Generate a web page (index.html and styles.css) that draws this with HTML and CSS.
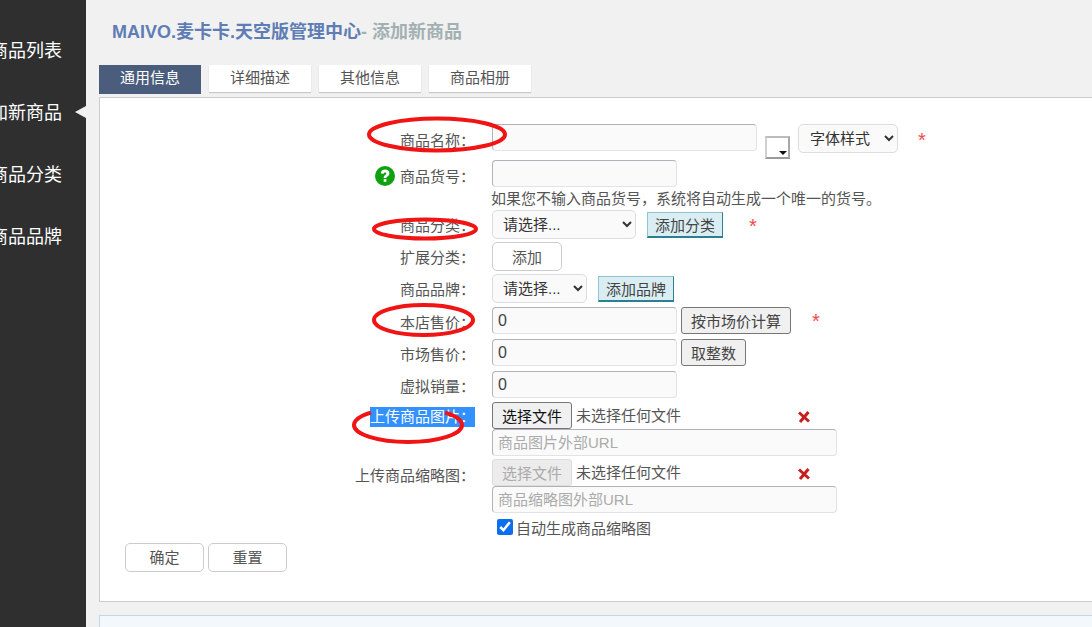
FILE: index.html
```html
<!DOCTYPE html>
<html lang="zh">
<head>
<meta charset="utf-8">
<title>添加新商品</title>
<link rel="stylesheet" href="styles.css">
</head>
<body>
<div class="app">
  <nav class="sidebar">
    <a class="nav-item">商品列表</a>
    <a class="nav-item nav-current">添加新商品</a>
    <a class="nav-item">商品分类</a>
    <a class="nav-item">商品品牌</a>
  </nav>
  <main class="main">
    <h1 class="title"><span class="brand">MAIVO.麦卡卡.天空版管理中心</span><span class="sub">- 添加新商品</span></h1>
    <div class="tabs">
      <a class="tab tab-active">通用信息</a>
      <a class="tab">详细描述</a>
      <a class="tab">其他信息</a>
      <a class="tab">商品相册</a>
    </div>
    <section class="panel">
      <form class="form">
        <div class="label label-name">商品名称：</div>
        <div class="field">
          <input class="input w-name" type="text">
          <span class="swatch"></span>
          <select class="select w-font"><option>字体样式</option></select>
          <span class="star star-name">*</span>
        </div>

        <div class="label label-low"><svg class="help" viewBox="0 0 20 20"><circle cx="10" cy="10" r="10" fill="#10a010"/><path d="M5.800 7.600C5.800 5 7.700 3.600 10.100 3.600s4.300 1.400 4.300 3.600c0 1.700-1 2.500-2 3.200-.8.600-1 .9-1 1.700H8.700c0-1.500.5-2.300 1.400-3 .8-.6 1.200-.9 1.200-1.600 0-.7-.5-1.100-1.200-1.100-.9 0-1.400.6-1.400 1.400z" fill="#fff"/><rect x="8.700" y="13.100" width="2.700" height="2.700" fill="#fff"/></svg>商品货号：</div>
        <div class="field"><input class="input w-sn" type="text"></div>

        <div></div>
        <div class="hint">如果您不输入商品货号，系统将自动生成一个唯一的货号。</div>

        <div class="label">商品分类：</div>
        <div class="field">
          <select class="select w-cat"><option>请选择...</option></select>
          <button type="button" class="btn-add">添加分类</button>
          <span class="star star-cat">*</span>
        </div>

        <div class="label">扩展分类：</div>
        <div class="field"><button type="button" class="btn-plain w-ext">添加</button></div>

        <div class="label">商品品牌：</div>
        <div class="field">
          <select class="select w-brand"><option>请选择...</option></select>
          <button type="button" class="btn-add">添加品牌</button>
        </div>

        <div class="label">本店售价：</div>
        <div class="field">
          <input class="input input-num w-sn" type="text" value="0">
          <button type="button" class="btn-gray">按市场价计算</button>
          <span class="star star-price">*</span>
        </div>

        <div class="label">市场售价：</div>
        <div class="field">
          <input class="input input-num w-sn" type="text" value="0">
          <button type="button" class="btn-gray">取整数</button>
        </div>

        <div class="label">虚拟销量：</div>
        <div class="field"><input class="input input-num w-sn" type="text" value="0"></div>

        <div class="label"><span class="selected">上传商品图片：</span></div>
        <div class="field">
          <button type="button" class="btn-file">选择文件</button>
          <span class="file-name">未选择任何文件</span>
          <svg class="del" viewBox="0 0 14 14"><path d="M2 2.500 L12 11.500 M11.500 2 L3 12" stroke="#c81e1e" stroke-width="3" fill="none"/></svg>
        </div>

        <div></div>
        <div class="field"><input class="input w-url" type="text" placeholder="商品图片外部URL"></div>

        <div class="label label-low">上传商品缩略图：</div>
        <div class="field">
          <button type="button" class="btn-file btn-file-off">选择文件</button>
          <span class="file-name">未选择任何文件</span>
          <svg class="del" viewBox="0 0 14 14"><path d="M2 2.500 L12 11.500 M11.500 2 L3 12" stroke="#c81e1e" stroke-width="3" fill="none"/></svg>
        </div>

        <div></div>
        <div class="field"><input class="input w-url" type="text" placeholder="商品缩略图外部URL"></div>

        <div></div>
        <label class="check-row"><input class="check" type="checkbox" checked>自动生成商品缩略图</label>
      </form>
      <div class="actions">
        <button type="button" class="btn-plain w-act">确定</button>
        <button type="button" class="btn-plain w-act">重置</button>
      </div>
    </section>
    <section class="panel-next"></section>
  </main>
  <svg class="marks" viewBox="0 0 1092 627" width="1092" height="627">
    <g fill="none" stroke="#f01414" stroke-width="4">
      <ellipse cx="437" cy="134.500" rx="68" ry="16"/>
      <ellipse cx="425" cy="229" rx="51" ry="9.500"/>
      <ellipse cx="423.500" cy="320" rx="49.500" ry="15"/>
      <path d="M371 412.600A54 17 0 1 0 445 412.600"/>
    </g>
  </svg>
</div>
</body>
</html>
```
FILE: styles.css
```css
* { box-sizing: border-box; }
html, body { margin: 0; height: 100%; overflow: hidden; }
body {
  font-family: "Liberation Sans", "Noto Sans CJK SC", sans-serif;
  font-size: 15px;
  color: #555;
  background: #f1f1f1;
}
.app { position: relative; display: flex; width: 1092px; height: 627px; overflow: hidden; }

.sidebar {
  flex: 0 0 86px;
  width: 86px;
  background: #2f2f2f;
  padding-top: 20px;
  overflow: hidden;
}
.nav-item {
  position: relative;
  display: flex;
  justify-content: flex-end;
  white-space: nowrap;
  height: 62px;
  line-height: 62px;
  padding-right: 24px;
  color: #fff;
  font-size: 18px;
}
.nav-current::after {
  content: "";
  position: absolute;
  right: 0;
  top: 24px;
  border: 6px solid transparent;
  border-left-width: 0;
  border-right: 11px solid #f1f1f1;
}

.main { flex: 1; min-width: 0; padding: 0 0 0 13px; }
.title {
  margin: 0;
  padding: 22px 0 0 13px;
  height: 65px;
  line-height: 21px;
  font-size: 18px;
  font-weight: bold;
  white-space: nowrap;
}
.brand { color: #5f7db5; }
.sub { color: #a3b0b2; }

.tabs { display: flex; gap: 8px; height: 32px; }
.tab {
  width: 102px;
  height: 27px;
  line-height: 25px;
  text-align: center;
  background: #fff;
  color: #555;
  font-size: 15px;
  box-shadow: 0 1px 1px #c8c8c8;
}
.tab-active { background: #4a5d7c; color: #fff; height: 29px; line-height: 26px; box-shadow: none; }

.panel {
  height: 505px;
  background: #fff;
  border: 1px solid #ccc;
  border-right: 0;
  padding-top: 26px;
}
.form {
  display: grid;
  grid-template-columns: 375px 1fr;
  grid-template-rows: 36px 27px 23px 32px 32px 33px 32px 32px 31px 27px 30px 27px 31px 26px;
  column-gap: 17px;
}
.label {
  display: flex;
  justify-content: flex-end;
  align-items: center;
  height: 27px;
  padding-top: 2px;
  white-space: nowrap;
}
.label-name { padding-top: 3px; }
.label-low { padding-top: 4px; }
.field { display: flex; align-items: flex-start; height: 100%; }
.hint { line-height: 23px; white-space: nowrap; margin-left: -1px; }

.input {
  height: 27px;
  padding: 0 5px;
  border: 1px solid #b4b0b8;
  border-right-color: #e2e2ea;
  border-bottom-color: #e2e2ea;
  border-radius: 4px;
  background: #fafafa;
  font: inherit;
  color: #555;
  outline: 0;
}
.input-num { font-size: 16px; color: #444; }
.input::placeholder { color: #aaa; opacity: 1; }
.w-name { width: 265px; }
.w-sn { width: 185px; }
.w-url { width: 345px; }

.select {
  height: 29px;
  padding: 0 2px 0 6px;
  border: 1px solid #dcdce4;
  border-radius: 5px;
  background-color: #fafafa;
  font: inherit;
  color: #333;
}
.w-font { width: 100px; margin-left: 8px; padding-left: 7px; }
.w-cat { width: 144px; }
.w-brand { width: 95px; }

.swatch {
  position: relative;
  width: 25px;
  height: 23px;
  margin: 12px 0 0 8px;
  background: #fff;
  border-top: 2px solid #bcbcbc;
  border-left: 2px solid #d0d0d0;
  border-right: 2px solid #a8a8a8;
  border-bottom: 2px solid #9a9a9a;
}
.swatch::after {
  content: "";
  position: absolute;
  right: 1px;
  bottom: 2px;
  border: 4px solid transparent;
  border-bottom-width: 0;
  border-top: 4px solid #111;
}

.star { color: #f24a4a; font-size: 20px; line-height: 20px; }
.star-name { margin: 6px 0 0 20px; }
.star-cat { margin: 6px 0 0 26px; }
.star-price { margin: 4px 0 0 21px; }

.btn-add {
  width: 76px;
  height: 26px;
  margin: 2px 0 0 11px;
  padding: 0;
  border: 1px solid #8cc4d0;
  border-right-color: #2a8090;
  border-bottom: 2px solid #2a8090;
  background: #d9edf2;
  color: #444;
  font: inherit;
  border-radius: 0;
}
.btn-gray {
  height: 27px;
  margin-left: 4px;
  padding: 0 9px;
  background: #f0f0f0;
  border: 1px solid #767676;
  border-radius: 3px;
  color: #444;
  font: inherit;
}
.btn-plain {
  height: 29px;
  background: #fff;
  border: 1px solid #ccc;
  border-radius: 5px;
  color: #555;
  font: inherit;
}
.w-ext { width: 70px; }
.w-act { width: 79px; padding-bottom: 3px; }

.selected { background: #3390ff; color: #fff; line-height: 20px; }
.btn-file {
  width: 80px;
  height: 27px;
  padding: 0;
  background: #f0f0f0;
  border: 1px solid #767676;
  border-radius: 3px;
  color: #111;
  font: inherit;
}
.btn-file-off { background: #ececec; border-color: #ddd; color: #aaa; }
.file-name { margin-left: 4px; line-height: 27px; }
.help { width: 20px; height: 20px; margin-right: 5px; }
.del { width: 14px; height: 14px; margin: 8px 0 0 116px; }
.check-row { display: flex; align-items: center; height: 20px; white-space: nowrap; }
.check { width: 16px; height: 16px; margin: -1px 3px 0 5px; accent-color: #0b6ff0; }

.actions { display: flex; gap: 4px; padding: 0 0 0 25px; }
.panel-next {
  height: 40px;
  margin-top: 13px;
  background: #f2f8fb;
  border: 1px solid #bcdbe4;
  border-right: 0;
}
.marks { position: absolute; left: 0; top: 0; pointer-events: none; }
```
